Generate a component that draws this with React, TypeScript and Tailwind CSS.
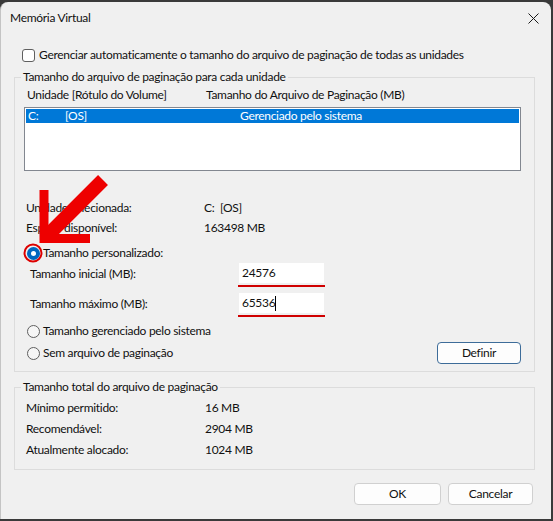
import React from "react";

function Radio({ checked }: { checked?: boolean }) {
  if (checked) {
    return (
      <span className="w-[13px] h-[13px] shrink-0 rounded-full bg-[#0067c0] flex items-center justify-center">
        <span className="w-[5px] h-[5px] rounded-full bg-white" />
      </span>
    );
  }
  return <span className="w-[13px] h-[13px] shrink-0 rounded-full border border-[#5f5f5f] bg-[#f6f6f6]" />;
}

function Group({ title, children, className }: { title: string; children: React.ReactNode; className?: string }) {
  return (
    <fieldset className={`border border-[#dcdcdc] ${className ?? ""}`}>
      <legend className="ml-[6px] px-[2px] leading-4">{title}</legend>
      {children}
    </fieldset>
  );
}

function Row({ label, value, valueX }: { label: string; value: string; valueX: string }) {
  return (
    <div className="flex h-4 leading-4 pl-[11px]">
      <span className={valueX}>{label}</span>
      <span className="whitespace-pre">{value}</span>
    </div>
  );
}

function SizeField({ label, value, caret }: { label: string; value: string; caret?: boolean }) {
  return (
    <div className="flex items-start pl-[15px]">
      <span className="w-[208px] mt-[2px] leading-4 pt-[1px]">{label}</span>
      <div className="flex flex-col w-[87px]">
        <div className="h-[20px] bg-white flex items-center pl-[3px] ml-[1px] w-[85px]">
          {value}
          {caret && <span className="w-px h-[15px] bg-black" />}
        </div>
        <div className="h-[2px] mt-[2px] bg-[#d00000]" />
      </div>
    </div>
  );
}

export default function App() {
  return (
    <div className="relative w-[553px] h-[521px] bg-[#3a3a3a] overflow-hidden text-[12px] tracking-[-0.3px] text-[#111] font-['Segoe_UI',Lato,sans-serif]">
      <div className="mt-[2px] w-[551px] h-[517px] bg-[#f0f0f0] rounded-t-[8px] border-l border-[#c4c4c4] flex flex-col">
        {/* title bar */}
        <div className="h-[32px] flex items-center justify-between pl-[9px] pr-[12px]">
          <span className="leading-4">Memória Virtual</span>
          <svg width="11" height="11" viewBox="0 0 11 11">
            <path d="M0.5 0.5L10.5 10.5M10.5 0.5L0.5 10.5" stroke="#1a1a1a" strokeWidth="1" />
          </svg>
        </div>

        <div className="pl-[13px] pr-[16px] flex flex-col">
          <label className="mt-[13px] flex items-center gap-[4px] h-4 leading-4 pl-[8px]">
            <span className="w-[13px] h-[13px] rounded-[3px] border border-[#5f5f5f] bg-white" />
            Gerenciar automaticamente o tamanho do arquivo de paginação de todas as unidades
          </label>

          <Group title="Tamanho do arquivo de paginação para cada unidade" className="mt-[6px] pb-[7px]">
            <div className="flex h-4 leading-4 mt-[2px] pl-[12px]">
              <span className="w-[179px]">Unidade [Rótulo do Volume]</span>
              <span>Tamanho do Arquivo de Paginação (MB)</span>
            </div>
            <div className="mt-[4px] ml-[9px] mr-[13px] h-[64px] bg-white border border-[#828790] p-px">
              <div className="h-[14px] bg-[#0078d7] text-white flex items-center leading-4 pl-[2px]">
                <span className="w-[37px]">C:</span>
                <span className="w-[175px]">[OS]</span>
                <span>Gerenciado pelo sistema</span>
              </div>
            </div>

            <div className="mt-[29px] flex flex-col gap-[4px]">
              <Row label="Unidade selecionada:" value="C:  [OS]" valueX="w-[178px]" />
              <Row label="Espaço disponível:" value="163498 MB" valueX="w-[178px]" />
            </div>

            <div className="mt-[9px] flex items-center gap-[3px] h-4 leading-4 pl-[12px]">
              <Radio checked />
              <span>Tamanho personalizado:</span>
            </div>

            <div className="mt-[2px]">
              <SizeField label="Tamanho inicial (MB):" value="24576" />
            </div>
            <div className="mt-[6px]">
              <SizeField label="Tamanho máximo (MB):" value="65536" caret />
            </div>

            <div className="mt-[6px] flex items-center gap-[3px] h-4 leading-4 pl-[12px]">
              <Radio />
              <span>Tamanho gerenciado pelo sistema</span>
            </div>
            <div className="mt-[3px] flex items-center justify-between h-[22px] pl-[12px] pr-[13px]">
              <div className="flex items-center gap-[3px] leading-4">
                <Radio />
                <span>Sem arquivo de paginação</span>
              </div>
              <button className="w-[84px] h-[22px] rounded-[4px] border border-[#3d6c99] bg-[#fdfdfd] leading-4">
                Definir
              </button>
            </div>
          </Group>

          <Group title="Tamanho total do arquivo de paginação" className="mt-[7px] pb-[11px]">
            <div className="mt-[5px] flex flex-col gap-[5px]">
              <Row label="Mínimo permitido:" value="16 MB" valueX="w-[179px]" />
              <Row label="Recomendável:" value="2904 MB" valueX="w-[179px]" />
              <Row label="Atualmente alocado:" value="1024 MB" valueX="w-[179px]" />
            </div>
          </Group>

          <div className="mt-[13px] flex justify-end gap-[7px] pr-[2px]">
            <button className="w-[87px] h-[22px] rounded-[4px] border border-[#d0d0d0] bg-[#fdfdfd] leading-4">OK</button>
            <button className="w-[85px] h-[22px] rounded-[4px] border border-[#d0d0d0] bg-[#fdfdfd] leading-4">Cancelar</button>
          </div>
        </div>
      </div>

      {/* red annotation */}
      <svg className="absolute left-0 top-0 pointer-events-none" width="553" height="521" viewBox="0 0 553 521">
        <line x1="48" y1="235" x2="103" y2="180" stroke="#ee0000" strokeWidth="14" />
        <polyline points="44,190 44,238.5 90,238.5" fill="none" stroke="#ee0000" strokeWidth="9" strokeLinejoin="miter" />
        <circle cx="33" cy="253" r="8.5" fill="none" stroke="#dd0000" strokeWidth="2" />
      </svg>
    </div>
  );
}
